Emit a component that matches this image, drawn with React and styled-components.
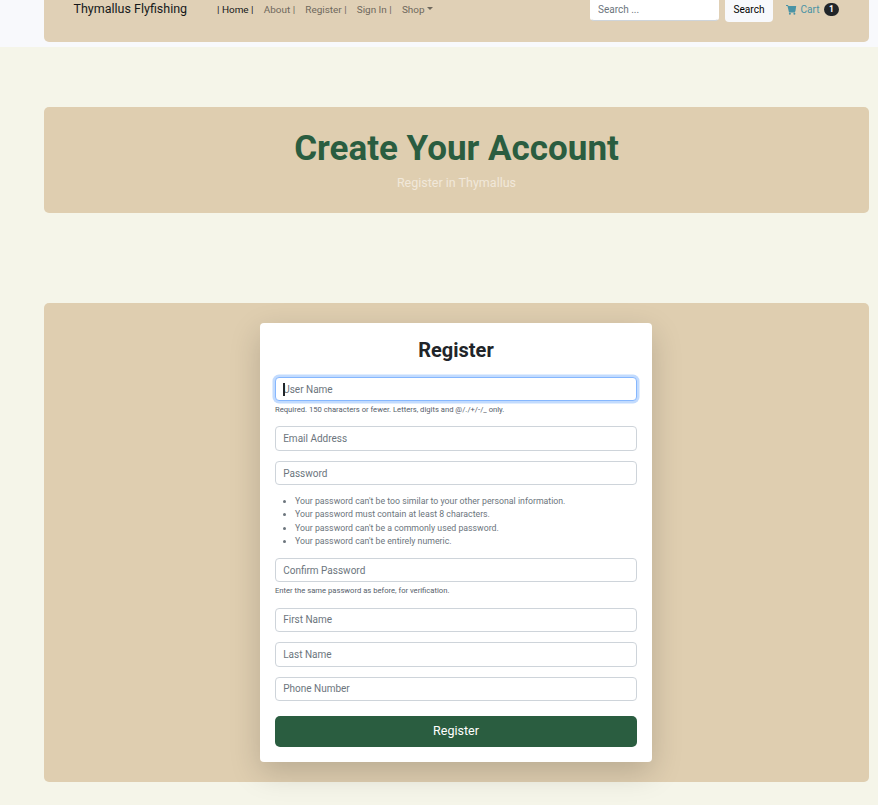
import React from "react";
import styled, { createGlobalStyle } from "styled-components";

const GlobalStyle = createGlobalStyle`
  *, *::before, *::after { box-sizing: border-box; }
  body {
    margin: 0;
    background: #f5f5e9;
    color: #212529;
    font-family: Roboto, "Liberation Sans", sans-serif;
    font-size: 10px;
    line-height: 1.5;
    overflow: hidden;
  }
  input, button { font-family: inherit; }
`;

const Page = styled.div`
  height: 805px;
  overflow: hidden;
`;

const Header = styled.header`
  height: 47px;
  padding: 0 9px 5px 44px;
  background: #f8f9fc;
`;

const NavBar = styled.nav`
  display: flex;
  align-items: flex-start;
  height: 42px;
  padding: 0 30px 0 29.5px;
  background: #e0d0b6;
  border-radius: 0 0 5px 5px;
`;

const Brand = styled.a`
  width: 143.5px;
  font-size: 12.5px;
  line-height: 18px;
  color: #16181a;
  white-space: nowrap;
`;

const NavLinks = styled.div`
  display: flex;
  flex: 1;
  gap: 10.2px;
  padding-top: 3px;
`;

const NavLink = styled.a`
  display: flex;
  align-items: center;
  height: 15px;
  font-size: 9.95px;
  white-space: nowrap;
  color: ${(p) => (p.$active ? "#16181a" : "#6f685d")};
`;

const Caret = styled.span`
  margin: -5px 0 0 2.5px;
  border-top: 3px solid currentColor;
  border-left: 3px solid transparent;
  border-right: 3px solid transparent;
`;

const SearchInput = styled.input`
  width: 129px;
  height: 24px;
  margin-top: -3px;
  padding: 1px 7px 0;
  border: 1px solid #ced4da;
  border-color: #fff #fff #ced4da;
  border-radius: 4px;
  font-size: 10px;
  background: #fff;
  &::placeholder { color: #6c757d; opacity: 1; }
`;

const SearchButton = styled.button`
  width: 48px;
  height: 25px;
  margin: -3px 13px 0 6px;
  padding: 0;
  border: 0;
  border-radius: 4px;
  background: #f8f9fc;
  color: #000;
  font-size: 10.1px;
`;

const CartLink = styled.a`
  display: flex;
  align-items: center;
  width: 53px;
  height: 15px;
  margin-top: 2px;
  color: #4993a5;
  font-size: 10.1px;
`;

const CartIcon = styled.svg`
  flex: none;
  width: 11px;
  height: 10px;
  margin-right: 3.5px;
  fill: currentColor;
`;

const Badge = styled.span`
  display: flex;
  align-items: center;
  justify-content: center;
  width: 15px;
  height: 13px;
  margin-left: auto;
  border-radius: 7px;
  background: #212529;
  color: #fff;
  font-size: 8.5px;
  font-weight: 700;
  line-height: 1;
`;

const Main = styled.main`
  padding: 60px 9px 0 44px;
`;

const Hero = styled.section`
  height: 106px;
  margin-bottom: 90px;
  padding-top: 21px;
  border-radius: 5px;
  background: #dfceb0;
  text-align: center;
`;

const HeroTitle = styled.h1`
  margin: 0;
  font-size: 35px;
  font-weight: 700;
  line-height: 42px;
  color: #2a5d40;
`;

const HeroText = styled.p`
  margin: 3px 0 0;
  font-size: 12.5px;
  line-height: 19px;
  color: #f1e8da;
`;

const Panel = styled.section`
  height: 479px;
  padding: 20px 217px 20px 216px;
  border-radius: 5px;
  background: #dfceb0;
`;

const Card = styled.form`
  height: 439px;
  padding: 15px;
  border-radius: 4px;
  background: #fff;
  box-shadow: 0 10px 31px rgba(0, 0, 0, 0.175);
`;

const CardTitle = styled.h2`
  margin: 0 0 14.8px;
  font-size: 20px;
  font-weight: 700;
  line-height: 24px;
  text-align: center;
`;

const Field = styled.div`
  position: relative;
  height: ${(p) => p.$height}px;
`;

const Input = styled.input`
  display: block;
  width: 100%;
  height: 24.5px;
  padding: ${(p) => (p.$raised ? "0 7.2px 1px" : "1px 7.2px 0")};
  border: 1px solid ${(p) => (p.$focused ? "#86b7fe" : "#ced4da")};
  border-radius: 4px;
  background: #fff;
  box-shadow: ${(p) => (p.$focused ? "0 0 0 2.5px rgba(13, 110, 253, 0.25)" : "none")};
  font-size: 10px;
  outline: none;
  &::placeholder { color: #6c757d; opacity: 1; }
`;

const TextCursor = styled.span`
  position: absolute;
  top: 6px;
  left: 8px;
  width: 2px;
  height: 13px;
  background: #212529;
`;

const Hint = styled.small`
  display: block;
  padding-top: 2.4px;
  font-size: 7.65px;
  line-height: 12px;
  color: #56606a;
`;

const Rules = styled.ul`
  margin: 9.8px 0 0;
  padding-left: 20px;
  font-size: 8.75px;
  line-height: 13.3px;
  color: #6c757d;
`;

const SubmitButton = styled.button`
  display: block;
  width: 100%;
  height: 31px;
  padding: 0 0 2px;
  border: 0;
  border-radius: 5px;
  background: #2a5d40;
  color: #fff;
  font-size: 12.5px;
`;

const links = ["About |", "Register |", "Sign In |"];

const fields = [
  { label: "User Name", height: 49.6, focused: true, hint: "Required. 150 characters or fewer. Letters, digits and @/./+/-/_ only." },
  { label: "Email Address", height: 34.5, raised: true },
  {
    label: "Password",
    height: 97.1,
    rules: [
      "Your password can't be too similar to your other personal information.",
      "Your password must contain at least 8 characters.",
      "Your password can't be a commonly used password.",
      "Your password can't be entirely numeric.",
    ],
  },
  { label: "Confirm Password", height: 49.9, hint: "Enter the same password as before, for verification." },
  { label: "First Name", height: 34.5, raised: true },
  { label: "Last Name", height: 34.5, raised: true },
  { label: "Phone Number", height: 39.1, raised: true },
];

export default function App() {
  return (
    <Page>
      <GlobalStyle />
      <Header>
        <NavBar>
          <Brand>Thymallus Flyfishing</Brand>
          <NavLinks>
            <NavLink $active>| Home |</NavLink>
            {links.map((link) => (
              <NavLink key={link}>{link}</NavLink>
            ))}
            <NavLink>
              Shop
              <Caret />
            </NavLink>
          </NavLinks>
          <SearchInput placeholder="Search ..." />
          <SearchButton>Search</SearchButton>
          <CartLink>
            <CartIcon viewBox="0 0 11 10">
              <path d="M0 0h2l.4 1H10.2L9.4 6.5H9v1H3L1.5 1H0z" />
              <circle cx="3.9" cy="8.8" r="1" />
              <circle cx="8.4" cy="8.8" r="1" />
            </CartIcon>
            Cart
            <Badge>1</Badge>
          </CartLink>
        </NavBar>
      </Header>
      <Main>
        <Hero>
          <HeroTitle>Create Your Account</HeroTitle>
          <HeroText>Register in Thymallus</HeroText>
        </Hero>
        <Panel>
          <Card>
            <CardTitle>Register</CardTitle>
            {fields.map((field) => (
              <Field key={field.label} $height={field.height}>
                <Input placeholder={field.label} $focused={field.focused} $raised={field.raised} />
                {field.focused && <TextCursor />}
                {field.hint && <Hint>{field.hint}</Hint>}
                {field.rules && (
                  <Rules>
                    {field.rules.map((rule) => (
                      <li key={rule}>{rule}</li>
                    ))}
                  </Rules>
                )}
              </Field>
            ))}
            <SubmitButton type="button">Register</SubmitButton>
          </Card>
        </Panel>
      </Main>
    </Page>
  );
}
